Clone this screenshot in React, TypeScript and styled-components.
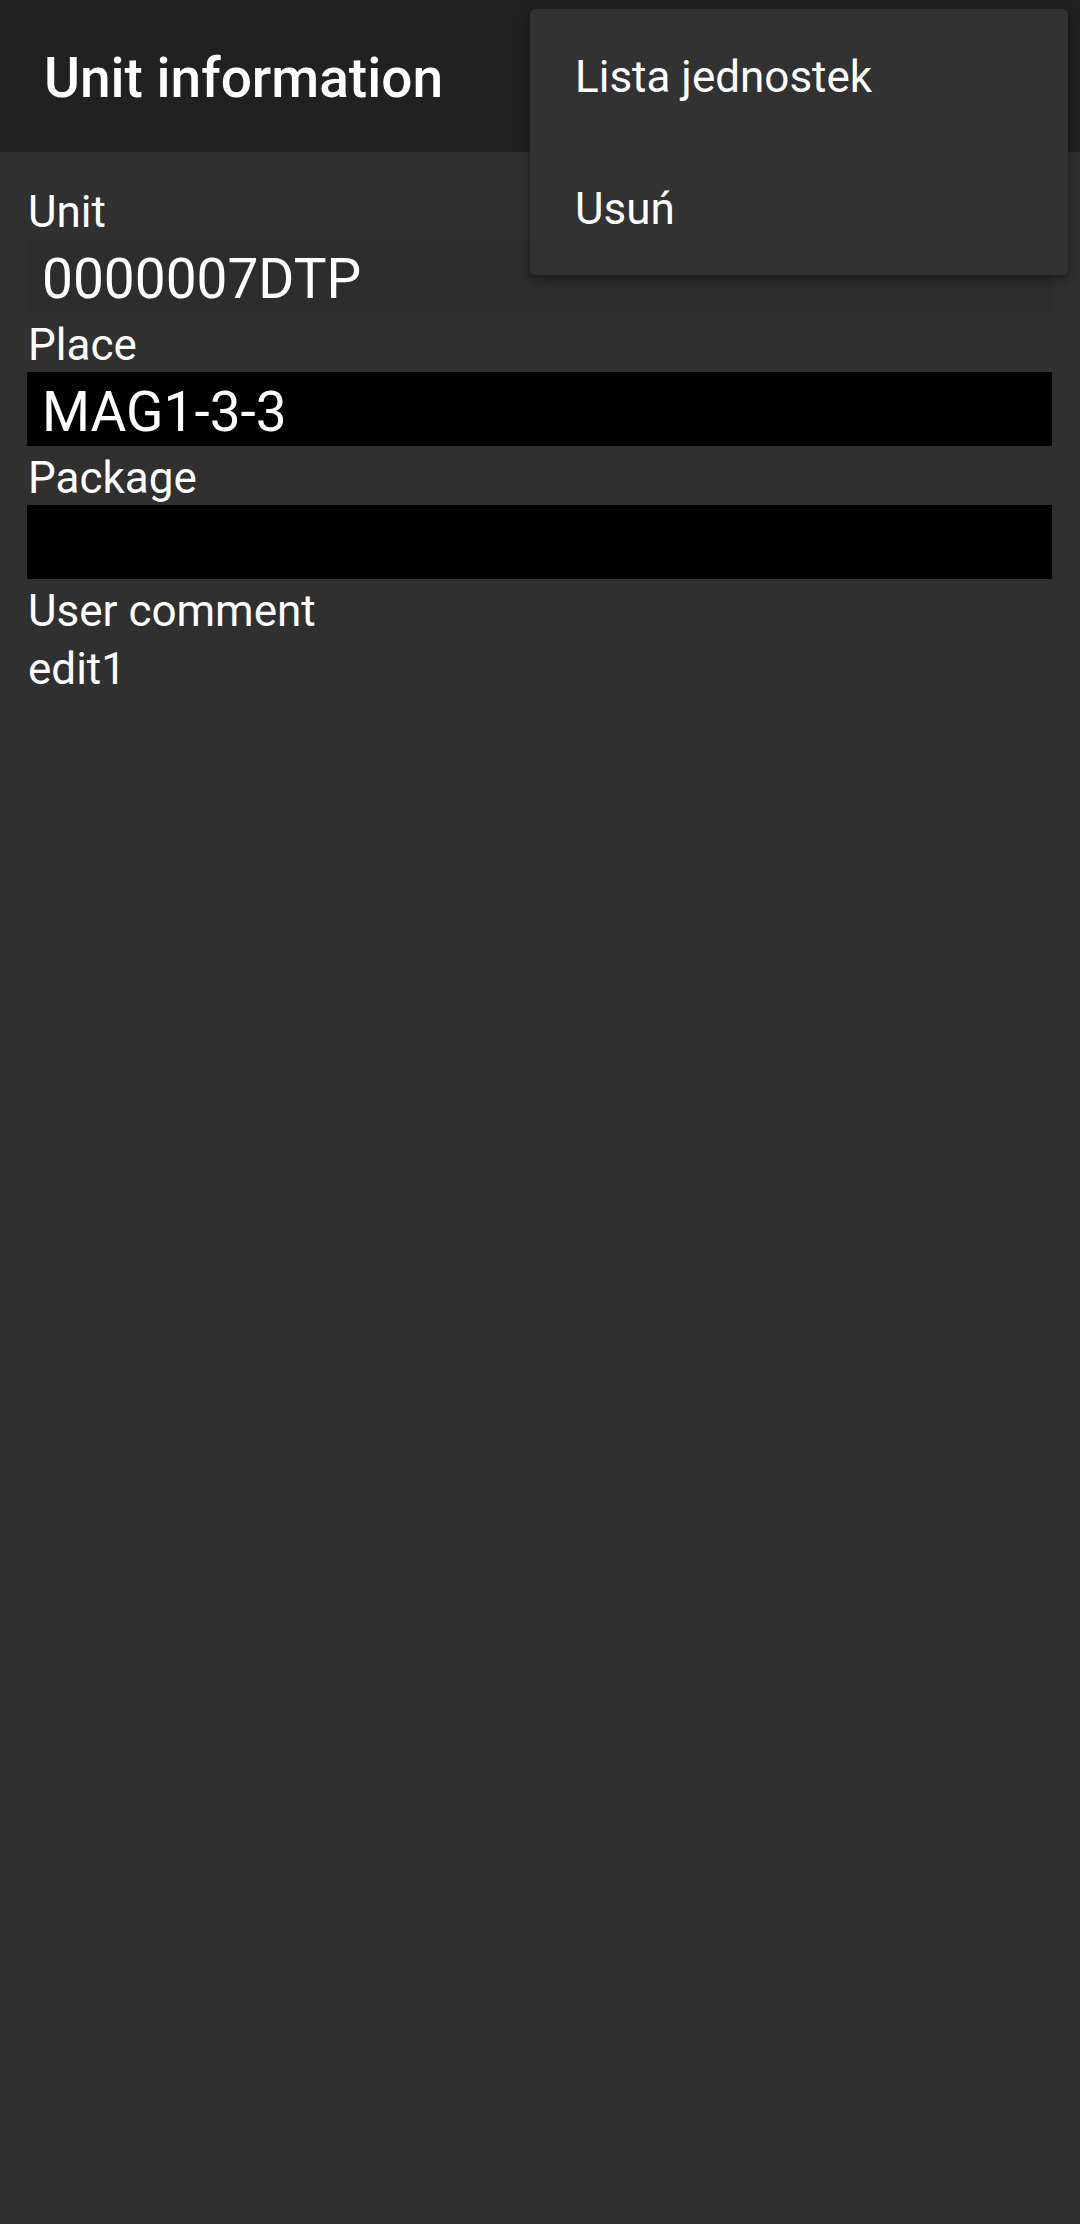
import * as React from 'react';
import styled, { createGlobalStyle } from 'styled-components';

const GlobalStyle = createGlobalStyle`
  html, body {
    margin: 0;
    padding: 0;
    background: #303030;
  }
  body {
    font-family: Roboto, "Noto Sans", "Liberation Sans", sans-serif;
    color: #ffffff;
  }
  * {
    box-sizing: border-box;
  }
`;

const Screen = styled.div`
  position: relative;
  width: 1080px;
  min-height: 2224px;
  background: #303030;
  overflow: hidden;
`;

const Toolbar = styled.header`
  display: flex;
  align-items: center;
  height: 152px;
  padding: 4px 0 0 44px;
  background: #212121;
`;

const Title = styled.h1`
  margin: 0;
  font-size: 55px;
  font-weight: 500;
  line-height: 148px;
  color: #ffffff;
`;

const Content = styled.main`
  display: flex;
  flex-direction: column;
  padding: 29px 28px 0 27px;
`;

const Label = styled.div`
  height: 58px;
  padding: 4px 0 0 1px;
  font-size: 44px;
  line-height: 55px;
  color: #ffffff;
  white-space: nowrap;
`;

const Field = styled.div<{ $readOnly?: boolean }>`
  height: 74px;
  margin-bottom: 1px;
  padding: 7px 0 0 15px;
  font-size: 55px;
  line-height: 66px;
  color: #ffffff;
  background: ${(p) => (p.$readOnly ? '#2d2d2d' : '#000000')};
  white-space: nowrap;
`;

const Menu = styled.ul`
  position: absolute;
  top: 9px;
  right: 12px;
  width: 538px;
  margin: 0;
  padding: 2px 0 0;
  list-style: none;
  background: #323232;
  border-radius: 5px;
  box-shadow: 0 6px 14px rgba(0, 0, 0, 0.28), 0 2px 4px rgba(0, 0, 0, 0.18);
`;

const MenuItem = styled.li`
  height: 132px;
  padding-left: 45px;
  font-size: 44px;
  line-height: 132px;
  color: #ffffff;
`;

const fields = [
  { label: 'Unit', value: '0000007DTP', readOnly: true },
  { label: 'Place', value: 'MAG1-3-3', readOnly: false },
  { label: 'Package', value: '', readOnly: false },
];

const menuItems = ['Lista jednostek', 'Usuń'];

const App: React.FC = () => {
  return (
    <Screen>
      <GlobalStyle />
      <Toolbar>
        <Title>Unit information</Title>
      </Toolbar>
      <Content>
        {fields.map((f) => (
          <React.Fragment key={f.label}>
            <Label>{f.label}</Label>
            <Field $readOnly={f.readOnly}>{f.value}</Field>
          </React.Fragment>
        ))}
        <Label>User comment</Label>
        <Label>edit1</Label>
      </Content>
      <Menu>
        {menuItems.map((item) => (
          <MenuItem key={item}>{item}</MenuItem>
        ))}
      </Menu>
    </Screen>
  );
};

export default App;
